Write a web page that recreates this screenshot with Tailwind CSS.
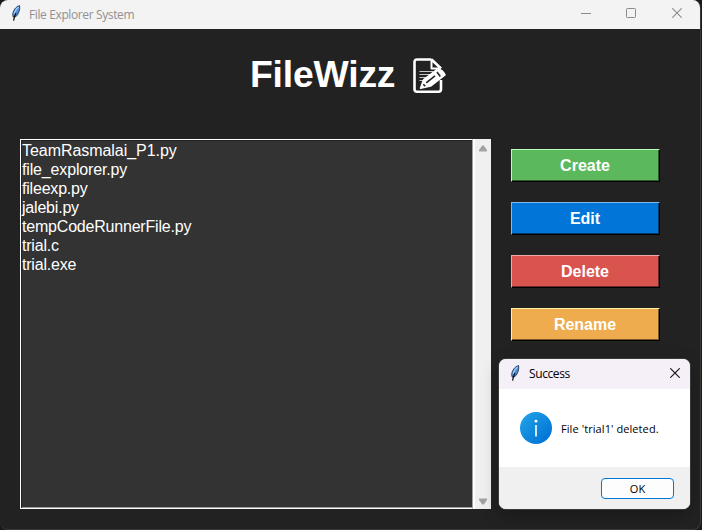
<!DOCTYPE html>
<html lang="en">
<head>
<meta charset="utf-8">
<title>File Explorer System</title>
<script src="https://cdn.jsdelivr.net/npm/@tailwindcss/browser@4"></script>
</head>
<body class="w-[702px] h-[530px] overflow-hidden bg-[#1b1818] font-['Liberation_Sans',Arial,sans-serif]">
<svg class="hidden">
  <symbol id="feather" viewBox="0 0 10 16">
    <path d="M8.6.6C5.5 1.2 2 5 1.7 9.5L2.1 12 5 11.6C7.8 9 9.3 4 8.6.6Z" fill="#4f8fdc" stroke="#1a2740" stroke-width=".8"/>
    <path d="M7.8 2C5.5 3.4 3.8 6 3.2 9" stroke="#9cc8f7" stroke-width="1.2" fill="none"/>
    <path d="M5 8C4 10 3 12.5 2.6 15.6" stroke="#0b0b12" stroke-width="1.2" fill="none"/>
  </symbol>
</svg>
<div class="relative w-[701px] h-[530px] flex flex-col bg-[#222222] rounded-lg overflow-hidden border-r border-b border-[#3b3838]">
  <header class="h-[29px] shrink-0 bg-[#f3f3f3] flex items-center pl-[11px] pr-[18px]">
    <svg class="w-[10px] h-4 mr-2 -mt-1"><use href="#feather"/></svg>
    <span class="text-[12px] leading-4 text-[#919191] font-['Open_Sans',sans-serif] tracking-[-0.38px] whitespace-nowrap">File Explorer System</span>
    <div class="ml-auto flex items-center -mt-[3px] text-[#8b8b8b]">
      <svg class="w-[10px] h-[10px] mr-[35px]" viewBox="0 0 10 10"><path d="M0 5.5H10" stroke="currentColor"/></svg>
      <svg class="w-[10px] h-[10px] mr-9" viewBox="0 0 10 10"><rect x=".5" y=".5" width="9" height="9" rx=".8" fill="none" stroke="currentColor"/></svg>
      <svg class="w-[10px] h-[10px]" viewBox="0 0 10 10"><path d="M.3.3 9.7 9.7M9.7.3.3 9.7" stroke="currentColor" stroke-width="1.1"/></svg>
    </div>
  </header>
  <div class="h-[110px] shrink-0 flex pl-[250px] pt-[24px]">
    <h1 class="w-[163px] text-[37.33px] leading-[42px] font-bold text-white whitespace-nowrap tracking-[-0.2px]">FileWizz</h1>
    <svg class="w-[34px] h-[36px] mt-[5px]" viewBox="0 0 34 36" fill="none" stroke="#fff" stroke-linejoin="round">
      <path d="M18.5 1.5H4Q1.5 1.5 1.5 4V31Q1.5 33.8 4 33.8H25.5Q28 33.8 28 31V22M18.5 1.5 28 10.5" stroke-width="2.6"/>
      <path d="M18.5 2V10.5H26" stroke-width="2"/>
      <path d="M6.5 13.5H20M6.5 16.5H17M6.5 19.5H14M6.5 22.5H11" stroke="#c8c8c8" stroke-width="1"/>
      <path d="M7.5 30.2 10.5 22 24.5 11.2Q29.5 11.2 32 16.8L17.5 28Z" fill="#fff" stroke="#fff" stroke-width="1.6"/>
      <path d="M13.2 24.8 22 17.9M10.3 26.2 12.2 28.3M24 14 27.3 18.4" stroke="#222" stroke-width="1.6"/>
    </svg>
  </div>
  <main class="flex pl-5">
    <ul class="w-[453px] h-[370px] bg-[#333333] border border-white border-r-[#a0a0a0] shadow-[inset_1px_1px_0_#222,inset_0_-1px_0_#999] pl-px pt-px text-[16px] leading-[19px] text-white whitespace-nowrap tracking-[-0.2px]">
      <li class="tracking-[-0.05px]">TeamRasmalai_P1.py</li>
      <li class="tracking-[-0.15px]">file_explorer.py</li>
      <li>fileexp.py</li>
      <li>jalebi.py</li>
      <li>tempCodeRunnerFile.py</li>
      <li>trial.c</li>
      <li>trial.exe</li>
    </ul>
    <div class="w-[18px] h-[370px] bg-[#f0f0f0] border-l-2 border-white flex flex-col items-center justify-between pt-[6px] pb-[4px]">
      <svg class="w-2 h-[7px]" viewBox="0 0 8 7"><path d="M3.2.5H4.8L8 5V6.5H0V5Z" fill="#a3a3a3"/></svg>
      <svg class="w-2 h-[7px]" viewBox="0 0 8 7"><path d="M0 .5H8V2L4.8 6.5H3.2L0 2Z" fill="#a3a3a3"/></svg>
    </div>
    <nav class="ml-5 mt-[10px] flex flex-col gap-5 text-[16px] leading-[31px] font-bold text-white">
      <button class="w-[149px] h-[33px] bg-[#5cb85c] border border-t-[#b8ffb8] border-l-[#b8ffb8] border-b-black border-r-black shadow-[inset_-1px_-1px_0_#2e5c2e] pr-px">Create</button>
      <button class="w-[149px] h-[33px] bg-[#0275d8] border border-t-[#80baec] border-l-[#80baec] border-b-black border-r-black shadow-[inset_-1px_-1px_0_#013b6c] pr-px">Edit</button>
      <button class="w-[149px] h-[33px] bg-[#d9534f] border border-t-[#eca9a7] border-l-[#eca9a7] border-b-black border-r-black shadow-[inset_-1px_-1px_0_#6d2a28] pr-px">Delete</button>
      <button class="w-[149px] h-[33px] bg-[#eeac4e] border border-t-[#fff1a8] border-l-[#fff1a8] border-b-black border-r-black shadow-[inset_-1px_-1px_0_#785627] pr-px">Rename</button>
    </nav>
  </main>
  <div role="dialog" class="absolute left-[499px] top-[359px] w-[191px] h-[150px] rounded-[7px] overflow-hidden bg-white flex flex-col shadow-[0_0_0_1px_#393939,0_6px_18px_rgba(0,0,0,0.28)] font-['Open_Sans',sans-serif] text-black">
    <div class="h-[30px] bg-[#f5eff7] flex items-center pl-[11px] pr-[10px]">
      <svg class="w-[10px] h-4 mr-[9px] -mt-[2px]"><use href="#feather"/></svg>
      <span class="text-[12px] leading-4 tracking-[-0.4px]">Success</span>
      <svg class="w-[10px] h-[10px] ml-auto -mt-[2px]" viewBox="0 0 10 10"><path d="M.3.3 9.7 9.7M9.7.3.3 9.7" stroke="#111" stroke-width="1.1"/></svg>
    </div>
    <div class="h-[78px] flex items-center pl-[21px]">
      <svg class="w-8 h-8 shrink-0" viewBox="0 0 32 32">
        <defs><linearGradient id="info" x1="0" y1="0" x2="1" y2="1"><stop offset=".1" stop-color="#20a0e6"/><stop offset=".9" stop-color="#0072d6"/></linearGradient></defs>
        <circle cx="16" cy="16" r="16" fill="url(#info)"/>
        <circle cx="16" cy="9.2" r="1.4" fill="#fff"/><path d="M16 13V24.5" stroke="#fff" stroke-width="1.6"/>
      </svg>
      <span class="ml-[9px] text-[11px] leading-4 whitespace-nowrap mt-px tracking-[0.08px]">File 'trial1' deleted.</span>
    </div>
    <div class="grow bg-[#f0f0f0] flex justify-end pr-4 pt-[11px]">
      <button class="w-[73px] h-[21px] bg-[#fdfdfd] border border-[#0078d4] rounded-[4px] text-[11px] leading-[20px]">OK</button>
    </div>
  </div>
</div>
</body>
</html>
